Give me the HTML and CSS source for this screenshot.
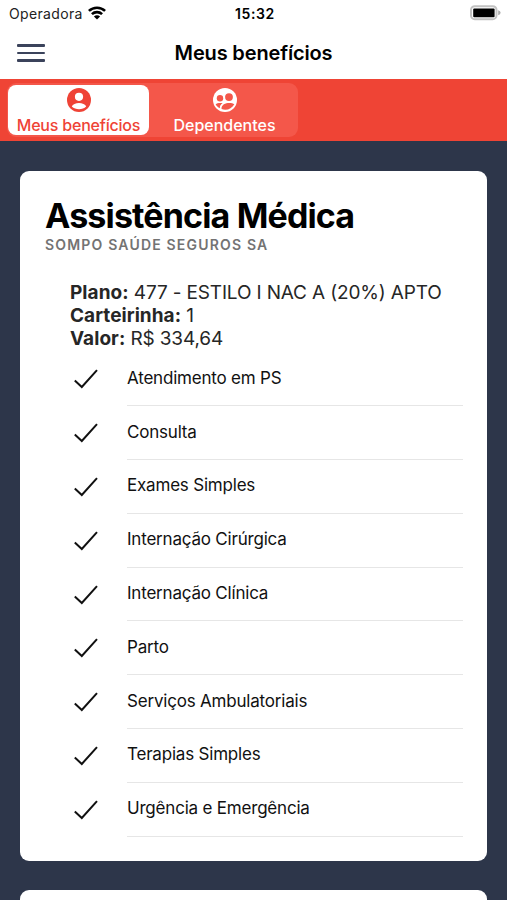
FILE: index.html
```html
<!DOCTYPE html>
<html lang="pt-BR">
  <head>
    <meta charset="UTF-8" />
    <meta name="viewport" content="width=device-width, initial-scale=1.0" />
    <link rel="stylesheet" href="styles.css">
    <title>Meus benefícios</title>
  </head>
  <body>
    <svg class="sprite" width="0" height="0">
      <symbol id="check" viewBox="0 0 24 20">
        <path d="M0.8 11.5L7.8 18L23 1.2" fill="none" stroke="#111" stroke-width="2" />
      </symbol>
    </svg>

    <div class="status-bar">
      <div class="carrier">
        <span>Operadora</span>
        <svg class="wifi" width="18" height="14" viewBox="0 0 18 14">
          <g fill="none" stroke="#000" stroke-width="2.6">
            <path d="M0.9 4.9C5.4 0.6 12.6 0.6 17.1 4.9" />
            <path d="M3.9 8.1C6.8 5.4 11.2 5.4 14.1 8.1" />
          </g>
          <path d="M5.9 10.4C7.7 8.8 10.3 8.8 12.1 10.4L9 13.6Z" />
        </svg>
      </div>
      <div class="clock">15:32</div>
      <svg class="battery" width="31" height="16" viewBox="0 0 31 16">
        <rect x="1" y="1.2" width="25.5" height="13" rx="3.8" fill="#fff" stroke="#c2c2c2" stroke-width="2" />
        <rect x="3.2" y="3.4" width="21.4" height="8.8" rx="1" />
        <path d="M28.2 5.2Q30.6 6 30.6 7.7Q30.6 9.4 28.2 10.2Z" fill="#aaa" />
      </svg>
    </div>

    <header class="toolbar">
      <button class="menu" aria-label="Menu">
        <span></span>
        <span></span>
        <span></span>
      </button>
      <h1>Meus benefícios</h1>
    </header>

    <nav class="tabs">
      <div class="segment">
        <button class="tab active">
          <svg width="24" height="24" viewBox="0 0 24 24">
            <circle cx="12" cy="12" r="12" fill="#ef4336" />
            <circle cx="12" cy="8.8" r="4.1" fill="#fff" />
            <path d="M4.8 18.6C6.5 13.8 17.5 13.8 19.2 18.6C15.6 22.2 8.4 22.2 4.8 18.6Z" fill="#fff" />
          </svg>
          <span>Meus benefícios</span>
        </button>
        <button class="tab">
          <svg width="24" height="24" viewBox="0 0 24 24">
            <circle cx="12" cy="12" r="12" fill="#fff" />
            <g fill="#f4574a">
              <circle cx="7" cy="10.2" r="3.2" />
              <circle cx="16" cy="9.1" r="3.9" />
              <path d="M2.6 16.3C4 15.2 6.6 14.7 9.6 15.2C7.5 16.6 6.6 18.2 6.9 20.3C4.9 19.3 3.5 18 2.6 16.3Z" />
              <path d="M8.5 21C8 14.5 18 14 21.3 16.2C18.8 20.8 13.5 23 8.5 21Z" />
            </g>
          </svg>
          <span>Dependentes</span>
        </button>
      </div>
    </nav>

    <main class="content">
      <section class="card">
        <h2>Assistência Médica</h2>
        <h3>SOMPO SAÚDE SEGUROS SA</h3>
        <div class="plan">
          <p><b>Plano:</b> 477 - ESTILO I NAC A (20%) APTO</p>
          <p><b>Carteirinha:</b> 1</p>
          <p><b>Valor:</b> R$ 334,64</p>
        </div>
        <ul class="benefits">
          <li><svg><use href="#check" /></svg><div><span>Atendimento em PS</span></div></li>
          <li><svg><use href="#check" /></svg><div><span>Consulta</span></div></li>
          <li><svg><use href="#check" /></svg><div><span>Exames Simples</span></div></li>
          <li><svg><use href="#check" /></svg><div><span>Internação Cirúrgica</span></div></li>
          <li><svg><use href="#check" /></svg><div><span>Internação Clínica</span></div></li>
          <li><svg><use href="#check" /></svg><div><span>Parto</span></div></li>
          <li><svg><use href="#check" /></svg><div><span>Serviços Ambulatoriais</span></div></li>
          <li><svg><use href="#check" /></svg><div><span>Terapias Simples</span></div></li>
          <li><svg><use href="#check" /></svg><div><span>Urgência e Emergência</span></div></li>
        </ul>
      </section>
      <section class="card"></section>
    </main>
  </body>
</html>
```

FILE: styles.css
```css
* {
  margin: 0;
  padding: 0;
  box-sizing: border-box;
}

body {
  display: flex;
  flex-direction: column;
  height: 100vh;
  overflow: hidden;
  background: #fff;
  color: #000;
  font-family: Inter, "Liberation Sans", sans-serif;
}

button {
  border: 0;
  background: none;
  font: inherit;
}

.sprite {
  position: absolute;
}

.status-bar {
  display: grid;
  grid-template-columns: 1fr auto 1fr;
  align-items: center;
  height: 27px;
  padding: 0 6px 0 9px;
  font-size: 14px;
}

.carrier {
  display: flex;
  align-items: center;
  gap: 5px;
  color: #222;
  letter-spacing: 0.35px;
}

.wifi {
  margin-top: -2px;
}

.clock {
  font-weight: 600;
  letter-spacing: 0.6px;
}

.battery {
  justify-self: end;
  margin-top: -1px;
}

.toolbar {
  display: grid;
  grid-template-columns: 1fr auto 1fr;
  align-items: center;
  height: 52px;
  padding: 0 17px;
}

.menu {
  display: flex;
  flex-direction: column;
  gap: 5px;
  width: 28px;
}

.menu span {
  height: 2.4px;
  border-radius: 1px;
  background: #3b435b;
}

.toolbar h1 {
  font-size: 20px;
  font-weight: 600;
  letter-spacing: -0.15px;
}

.tabs {
  height: 62px;
  padding: 4px 7px;
  background: #ef4435;
}

.segment {
  display: flex;
  width: 291px;
  height: 54px;
  border-radius: 9px;
  background: #f4574a;
}

.tab {
  display: flex;
  flex: 1;
  flex-direction: column;
  align-items: center;
  gap: 3px;
  margin: 2px 0 2px 1px;
  padding-top: 3px;
  border-radius: 8px;
  color: #fff;
  font-size: 16px;
  font-weight: 500;
  line-height: 20px;
}

.tab svg {
  flex-shrink: 0;
}

.tab.active {
  flex: 0 0 141px;
  margin-right: 1px;
  background: #fff;
  color: #ef4336;
  letter-spacing: -0.2px;
}

.content {
  flex: 1;
  overflow: hidden;
  padding: 30px 20px 0;
  background: #2d364a;
}

.card {
  height: 690px;
  margin-bottom: 29px;
  padding: 24px 24px 24px 25px;
  border-radius: 9px;
  background: #fff;
}

.card h2 {
  font-size: 34px;
  font-weight: 700;
  line-height: 41px;
  letter-spacing: -0.85px;
}

.card h3 {
  color: #737373;
  font-size: 14px;
  font-weight: 600;
  line-height: 18px;
  letter-spacing: 1.18px;
}

.plan {
  padding: 27px 0 2.5px 25px;
  color: #262626;
  font-size: 19px;
  line-height: 23px;
  letter-spacing: -0.15px;
}

.plan b {
  font-weight: 700;
  letter-spacing: 0.05px;
}

.benefits {
  padding-left: 29px;
  list-style: none;
}

.benefits li {
  display: flex;
  align-items: center;
  height: 53.8px;
}

.benefits svg {
  width: 24px;
  height: 20px;
  margin-right: 29px;
}

.benefits div {
  display: flex;
  flex: 1;
  align-items: center;
  height: 100%;
  padding-bottom: 2px;
  border-bottom: 1px solid #e6e6e6;
  color: #111;
  font-size: 17px;
  letter-spacing: -0.2px;
}
```
